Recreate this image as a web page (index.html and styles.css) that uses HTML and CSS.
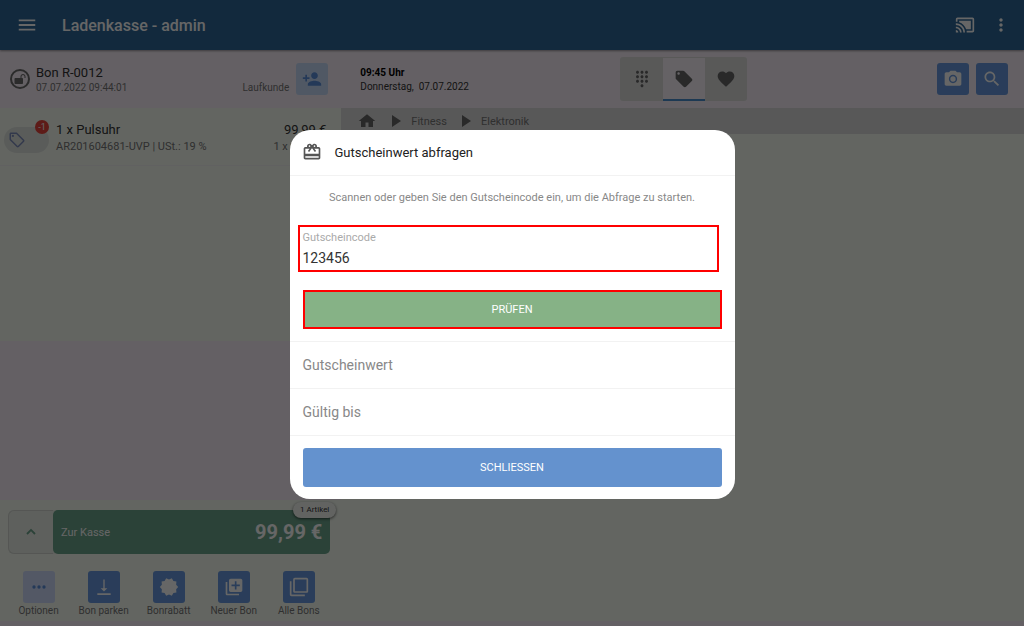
FILE: index.html
```html
<!DOCTYPE html>
<html lang="de">
<head>
    <meta charset="UTF-8">
    <meta name="viewport" content="width=device-width, initial-scale=1.0">
    <title>Ladenkasse - admin</title>
    <link rel="stylesheet" href="styles.css">
</head>
<body>
    <div class="app">
        <header class="app-bar">
            <button type="button" class="icon-btn" aria-label="Menü">
                <svg width="22" height="22" viewBox="0 0 24 24"><path d="M3 18h18v-2H3v2zm0-5h18v-2H3v2zm0-7v2h18V6H3z"/></svg>
            </button>
            <h1>Ladenkasse - admin</h1>
            <button type="button" class="icon-btn" aria-label="Kundendisplay">
                <svg width="20" height="20" viewBox="0 0 24 24"><path d="M1 18v3h3c0-1.66-1.34-3-3-3zm0-4v2c2.76 0 5 2.24 5 5h2c0-3.87-3.13-7-7-7zm18-7H5v1.63c3.96 1.28 7.09 4.41 8.37 8.37H19V7zM1 10v2c4.97 0 9 4.03 9 9h2c0-6.08-4.93-11-11-11zm20-7H3c-1.1 0-2 .9-2 2v3h2V5h18v14h-7v2h7c1.1 0 2-.9 2-2V5c0-1.1-.9-2-2-2z"/></svg>
            </button>
            <button type="button" class="icon-btn" aria-label="Mehr">
                <svg width="20" height="20" viewBox="0 0 24 24"><path d="M12 8c1.1 0 2-.9 2-2s-.9-2-2-2-2 .9-2 2 .9 2 2 2zm0 2c-1.1 0-2 .9-2 2s.9 2 2 2 2-.9 2-2-.9-2-2-2zm0 6c-1.1 0-2 .9-2 2s.9 2 2 2 2-.9 2-2-.9-2-2-2z"/></svg>
            </button>
        </header>

        <div class="columns">
            <section class="receipt">
                <div class="receipt-head">
                    <span class="lock">
                        <svg width="12" height="12" viewBox="0 0 24 24"><path d="M18 2c-2.800 0-5 2.200-5 5v3H3c-1.100 0-2 .9-2 2v8c0 1.100.9 2 2 2h13c1.100 0 2-.9 2-2v-8c0-1.100-.9-2-2-2h-1V7a3 3 0 0 1 6 0v3h2V7c0-2.800-2.200-5-5-5z"/></svg>
                    </span>
                    <div class="receipt-info">
                        <div class="name">Bon R-0012</div>
                        <div class="small">07.07.2022 09:44:01</div>
                    </div>
                    <span class="customer small">Laufkunde</span>
                    <button type="button" class="tile light" aria-label="Kunde hinzufügen">
                        <svg width="20" height="20" viewBox="0 0 24 24"><path d="M15 12c2.210 0 4-1.790 4-4s-1.790-4-4-4-4 1.790-4 4 1.790 4 4 4zm-9-2V7H4v3H1v2h3v3h2v-3h3v-2H6zm9 4c-2.670 0-8 1.340-8 4v2h16v-2c0-2.660-5.330-4-8-4z"/></svg>
                    </button>
                </div>

                <div class="items">
                    <div class="item">
                        <span class="item-tag">
                            <svg width="18" height="18" viewBox="0 0 24 24"><path d="M21.400 11.600l-9-9C12.050 2.220 11.550 2 11 2H4c-1.100 0-2 .9-2 2v7c0 .55.22 1.050.59 1.420l9 9c.36.36.86.58 1.410.58s1.050-.22 1.410-.59l7-7c.37-.36.59-.86.59-1.410s-.23-1.060-.6-1.400zM13 20L4 11V4h7l9 9-7 7z"/><circle cx="6.500" cy="6.500" r="1.500"/></svg>
                            <span class="badge">-1</span>
                        </span>
                        <div class="item-text">
                            <div class="line"><span>1 x Pulsuhr</span><span>99,99 €</span></div>
                            <div class="line sub"><span>AR201604681-UVP | USt.: 19 %</span><span>1 x 99,99 €</span></div>
                        </div>
                    </div>
                </div>

                <div class="receipt-foot">
                    <div class="pay">
                        <button type="button" class="expand" aria-label="Aufklappen">
                            <svg width="16" height="16" viewBox="0 0 24 24"><path d="M12 7l-7 7 2 2 5-5 5 5 2-2z"/></svg>
                        </button>
                        <button type="button" class="checkout"><span>Zur Kasse</span><strong>99,99 €</strong></button>
                        <span class="count">1 Artikel</span>
                    </div>
                    <div class="actions">
                        <div class="action">
                            <button type="button" class="tile light" id="options" aria-labelledby="l1">
                                <svg width="20" height="20" viewBox="0 0 24 24"><circle cx="6" cy="12" r="2"/><circle cx="12" cy="12" r="2"/><circle cx="18" cy="12" r="2"/></svg>
                            </button>
                            <span id="l1">Optionen</span>
                        </div>
                        <div class="action">
                            <button type="button" class="tile" aria-labelledby="l2">
                                <svg width="20" height="20" viewBox="0 0 24 24"><path d="M11.200 3h1.600v10.500H16L12 17.500 8 13.500h3.200zM4 19.500h16v2H4z"/></svg>
                            </button>
                            <span id="l2">Bon parken</span>
                        </div>
                        <div class="action">
                            <button type="button" class="tile" aria-labelledby="l3">
                                <svg width="20" height="20" viewBox="0 0 24 24"><path d="M23 12l-2.440-2.780.34-3.680-3.610-.82-1.890-3.180L12 3 8.600 1.540 6.710 4.720l-3.610.81.34 3.680L1 12l2.440 2.780-.34 3.690 3.610.82 1.890 3.180L12 21l3.400 1.460 1.890-3.180 3.610-.82-.34-3.680z"/></svg>
                            </button>
                            <span id="l3">Bonrabatt</span>
                        </div>
                        <div class="action">
                            <button type="button" class="tile" aria-labelledby="l4">
                                <svg width="20" height="20" viewBox="0 0 24 24"><path d="M4 6H2v14c0 1.100.9 2 2 2h14v-2H4V6zm16-4H8c-1.100 0-2 .9-2 2v12c0 1.100.9 2 2 2h12c1.100 0 2-.9 2-2V4c0-1.100-.9-2-2-2zm-1 9h-4v4h-2v-4H9V9h4V5h2v4h4v2z"/></svg>
                            </button>
                            <span id="l4">Neuer Bon</span>
                        </div>
                        <div class="action">
                            <button type="button" class="tile" aria-labelledby="l5">
                                <svg width="20" height="20" viewBox="0 0 24 24"><path d="M3 5H1v16c0 1.100.9 2 2 2h16v-2H3V5zm18-4H7c-1.100 0-2 .9-2 2v14c0 1.100.9 2 2 2h14c1.100 0 2-.9 2-2V3c0-1.100-.9-2-2-2zm0 16H7V3h14v14z"/></svg>
                            </button>
                            <span id="l5">Alle Bons</span>
                        </div>
                    </div>
                </div>
            </section>

            <section class="catalog">
                <div class="toolbar">
                    <div class="clock">
                        <strong>09:45 Uhr</strong>
                        <span>Donnerstag,&nbsp; 07.07.2022</span>
                    </div>
                    <div class="tabs">
                        <button type="button" class="tab" aria-label="Ziffernblock">
                            <svg width="18" height="18" viewBox="0 0 24 24"><path d="M12 19c-1.100 0-2 .9-2 2s.9 2 2 2 2-.9 2-2-.9-2-2-2zM6 1c-1.100 0-2 .9-2 2s.9 2 2 2 2-.9 2-2-.9-2-2-2zm0 6c-1.100 0-2 .9-2 2s.9 2 2 2 2-.9 2-2-.9-2-2-2zm0 6c-1.100 0-2 .9-2 2s.9 2 2 2 2-.9 2-2-.9-2-2-2zm12-8c1.100 0 2-.9 2-2s-.9-2-2-2-2 .9-2 2 .9 2 2 2zm-6 8c-1.100 0-2 .9-2 2s.9 2 2 2 2-.9 2-2-.9-2-2-2zm6 0c-1.100 0-2 .9-2 2s.9 2 2 2 2-.9 2-2-.9-2-2-2zm0-6c-1.100 0-2 .9-2 2s.9 2 2 2 2-.9 2-2-.9-2-2-2zm-6 0c-1.100 0-2 .9-2 2s.9 2 2 2 2-.9 2-2-.9-2-2-2zm0-6c-1.100 0-2 .9-2 2s.9 2 2 2 2-.9 2-2-.9-2-2-2z"/></svg>
                        </button>
                        <button type="button" class="tab active" aria-label="Artikel">
                            <svg width="20" height="20" viewBox="0 0 24 24"><path d="M21.410 11.580l-9-9C12.050 2.220 11.550 2 11 2H4c-1.100 0-2 .9-2 2v7c0 .55.22 1.050.59 1.420l9 9c.36.36.86.58 1.410.58.55 0 1.050-.22 1.410-.59l7-7c.37-.36.59-.86.59-1.410 0-.55-.23-1.060-.59-1.420zM5.500 7C4.670 7 4 6.330 4 5.500S4.670 4 5.500 4 7 4.670 7 5.500 6.330 7 5.500 7z"/></svg>
                        </button>
                        <button type="button" class="tab" aria-label="Favoriten">
                            <svg width="20" height="20" viewBox="0 0 24 24"><path d="M12 21.350l-1.450-1.320C5.400 15.360 2 12.280 2 8.500 2 5.420 4.420 3 7.500 3c1.740 0 3.410.81 4.500 2.090C13.090 3.810 14.760 3 16.500 3 19.580 3 22 5.420 22 8.500c0 3.780-3.400 6.860-8.550 11.540L12 21.350z"/></svg>
                        </button>
                    </div>
                    <div class="tools">
                        <button type="button" class="tile" aria-label="Kamera">
                            <svg width="20" height="20" viewBox="0 0 24 24"><circle cx="12" cy="12" r="3.200"/><path d="M9 2L7.170 4H4c-1.100 0-2 .9-2 2v12c0 1.100.9 2 2 2h16c1.100 0 2-.9 2-2V6c0-1.100-.9-2-2-2h-3.170L15 2H9zm3 15c-2.760 0-5-2.240-5-5s2.240-5 5-5 5 2.240 5 5-2.240 5-5 5z"/></svg>
                        </button>
                        <button type="button" class="tile" aria-label="Suchen">
                            <svg width="20" height="20" viewBox="0 0 24 24"><path d="M15.500 14h-.79l-.28-.27C15.410 12.590 16 11.110 16 9.500 16 5.910 13.090 3 9.500 3S3 5.910 3 9.500 5.910 16 9.500 16c1.610 0 3.090-.59 4.230-1.570l.27.28v.79l5 4.990L20.490 19l-4.990-5zm-6 0C7.010 14 5 11.990 5 9.500S7.010 5 9.500 5 14 7.010 14 9.500 11.990 14 9.500 14z"/></svg>
                        </button>
                    </div>
                </div>
                <nav class="breadcrumb">
                    <a href="#" aria-label="Start"><svg width="18" height="18" viewBox="0 0 24 24"><path d="M10 20v-6h4v6h6v-8h3L12 3 1 12h3v8z"/></svg></a>
                    <svg width="10" height="12" viewBox="0 0 10 12"><path d="M1 0l9 6-9 6z"/></svg>
                    <a href="#">Fitness</a>
                    <svg width="10" height="12" viewBox="0 0 10 12"><path d="M1 0l9 6-9 6z"/></svg>
                    <a href="#">Elektronik</a>
                </nav>
                <div class="products"></div>
            </section>
        </div>
    </div>

    <div class="backdrop">
        <form class="dialog" role="dialog" aria-labelledby="dialogTitle">
            <div class="dialog-head">
                <svg width="20" height="20" viewBox="0 0 24 24"><path d="M20 6h-2.180c.11-.31.18-.65.18-1 0-1.660-1.340-3-3-3-1.050 0-1.960.54-2.500 1.350l-.5.67-.5-.68C10.960 2.540 10.050 2 9 2 7.340 2 6 3.340 6 5c0 .35.07.69.18 1H4c-1.110 0-1.990.89-1.990 2L2 19c0 1.110.89 2 2 2h16c1.110 0 2-.89 2-2V8c0-1.110-.89-2-2-2zm-5-2c.55 0 1 .45 1 1s-.45 1-1 1-1-.45-1-1 .45-1 1-1zM9 4c.55 0 1 .45 1 1s-.45 1-1 1-1-.45-1-1 .45-1 1-1zm11 15H4v-2h16v2zm0-5H4V8h5.080L7 10.830 8.620 12 11 8.760l1-1.360 1 1.360L15.380 12 17 10.830 14.920 8H20v6z"/></svg>
                <h2 id="dialogTitle">Gutscheinwert abfragen</h2>
            </div>
            <p class="hint">Scannen oder geben Sie den Gutscheincode ein, um die Abfrage zu starten.</p>
            <div class="field">
                <label for="code">Gutscheincode</label>
                <input type="text" id="code" value="123456">
            </div>
            <button type="button" class="btn check">PRÜFEN</button>
            <div class="row">Gutscheinwert</div>
            <div class="row">Gültig bis</div>
            <div class="dialog-foot">
                <button type="button" class="btn close">SCHLIESSEN</button>
            </div>
        </form>
    </div>
</body>
</html>
```

FILE: styles.css
```css
* {
    box-sizing: border-box;
}
body {
    margin: 0;
    font-family: Roboto, "Liberation Sans", sans-serif;
    font-size: 13px;
    color: #333;
    background: #faf1fa;
}
button {
    font-family: inherit;
    border: none;
    padding: 0;
    cursor: pointer;
}
svg {
    display: block;
    flex: none;
    fill: currentColor;
}
.app {
    display: flex;
    flex-direction: column;
    min-height: 100vh;
    padding-bottom: 5px;
}

/* Kopfzeile */
.app-bar {
    display: flex;
    align-items: center;
    gap: 16px;
    height: 50px;
    padding: 0 13px 0 16px;
    background: #2d6798;
    color: #fff;
    box-shadow: 0 1px 2px rgba(0,0,0,0.4);
    z-index: 1;
}
.app-bar h1 {
    flex: 1;
    margin: 0 0 0 8px;
    font-size: 16px;
    font-weight: 500;
}
.icon-btn {
    background: none;
    color: inherit;
}
.columns {
    flex: 1;
    display: grid;
    grid-template-columns: 1fr 2fr;
}

/* Bon */
.receipt {
    display: flex;
    flex-direction: column;
}
.receipt-head {
    display: flex;
    align-items: center;
    height: 58px;
    padding: 0 13px 0 10px;
}
.lock {
    display: flex;
    align-items: center;
    justify-content: center;
    width: 20px;
    height: 20px;
    border: 2px solid #6b6b6b;
    border-radius: 50%;
    color: #6b6b6b;
}
.receipt-info {
    flex: 1;
    margin: 2px 0 0 6px;
}
.name {
    line-height: 16px;
}
.small {
    font-size: 10px;
    line-height: 14px;
    color: #777;
}
.customer {
    margin: 18px 7px 0 0;
}
.tile {
    display: flex;
    align-items: center;
    justify-content: center;
    width: 32px;
    height: 32px;
    border-radius: 3px;
    background: #699ae0;
    color: #fff;
}
.tile.light {
    background: #c8dcfa;
    color: #5a8fdc;
}
#options {
    background: #cfdcfc;
}
.items {
    flex: 0 0 233px;
    background: #f7fdf3;
}
.item {
    display: flex;
    align-items: center;
    gap: 7px;
    height: 58px;
    padding: 2px 15px 0 4px;
    border-bottom: 1px solid #f2f2f2;
}
.item-tag {
    position: relative;
    display: flex;
    align-items: center;
    width: 45px;
    height: 26px;
    margin-top: 4px;
    padding-left: 4px;
    border-radius: 13px;
    background: #e2e6e0;
    color: #7f8fbe;
}
.badge {
    position: absolute;
    top: -7px;
    right: 0;
    width: 14px;
    border-radius: 7px;
    background: #e8453c;
    color: #fff;
    font-size: 9px;
    line-height: 14px;
    text-align: center;
}
.item-text {
    flex: 1;
}
.line {
    display: flex;
    justify-content: space-between;
    line-height: 17px;
}
.line.sub {
    font-size: 11px;
    color: #777;
}
.receipt-foot {
    margin-top: auto;
    padding: 10px 11px 3px 8px;
    background: #f7fdf3;
}
.pay {
    position: relative;
    display: flex;
    height: 44px;
    border-radius: 6px;
    background: #ebefe8;
}
.expand {
    display: flex;
    align-items: center;
    justify-content: center;
    width: 45px;
    border: 1px solid #d4d8d2;
    border-right: none;
    border-radius: 6px 0 0 6px;
    background: none;
    color: #6ca58c;
}
.checkout {
    flex: 1;
    display: flex;
    align-items: center;
    justify-content: space-between;
    padding: 0 8px;
    border-radius: 5px;
    background: #6ca58c;
    color: #fff;
    font-size: 11px;
}
.checkout strong {
    font-size: 20px;
    font-weight: 700;
}
.count {
    position: absolute;
    top: -8px;
    right: -6px;
    padding: 0 7px;
    border-radius: 8px;
    background: #f5f8f3;
    box-shadow: 0 1px 3px rgba(0,0,0,0.6);
    font-size: 8px;
    line-height: 16px;
}
.actions {
    display: grid;
    grid-template-columns: repeat(5, 1fr);
    margin: 17px -1px 0 -2px;
}
.action {
    display: flex;
    flex-direction: column;
    align-items: center;
    font-size: 10px;
    line-height: 15px;
    color: #777;
    white-space: nowrap;
}

/* Artikelauswahl */
.catalog {
    display: flex;
    flex-direction: column;
}
.toolbar {
    display: grid;
    grid-template-columns: 260px 1fr auto;
    align-items: center;
    height: 58px;
    padding: 0 16px 0 19px;
}
.clock {
    display: flex;
    flex-direction: column;
    margin-top: 2px;
    font-size: 10px;
    line-height: 14px;
}
.clock strong {
    color: #000;
}
.tabs {
    display: flex;
}
.tab {
    display: flex;
    justify-content: center;
    align-items: center;
    width: 42px;
    height: 44px;
    background: #dededd;
    color: #666;
}
.tab.active {
    background: #fcf6fd;
    border-top: 1px solid #dededd;
    border-bottom: 2px solid #4a8fd0;
}
.tab:first-child {
    width: 43px;
    border-radius: 3px 0 0 3px;
}
.tab:last-child {
    border-radius: 0 3px 3px 0;
}
.tools {
    display: flex;
    gap: 7px;
}
.breadcrumb {
    display: flex;
    align-items: center;
    height: 26px;
    padding-left: 17px;
    background: #dcdcdc;
    color: #666;
}
.breadcrumb a {
    margin-right: 14px;
    color: #777;
    font-size: 11px;
    text-decoration: none;
}
.breadcrumb a:first-child {
    margin-right: 15px;
    color: #666;
}
.breadcrumb > svg {
    margin-right: 10px;
}
.products {
    flex: 1;
    background: #f7fdf3;
}

/* Dialog */
.backdrop {
    position: fixed;
    inset: 0;
    display: flex;
    align-items: center;
    justify-content: center;
    padding-top: 2px;
    background: rgba(0,0,0,0.6);
    z-index: 2;
}
.dialog {
    width: 445px;
    max-width: 96%;
    border-radius: 20px;
    background: #fff;
    overflow: hidden;
}
.dialog-head {
    display: flex;
    align-items: center;
    gap: 13px;
    height: 46px;
    padding: 0 12px;
    border-bottom: 1px solid #f2f2f2;
    color: #555;
}
.dialog-head h2 {
    margin: 0;
    font-size: 13px;
    font-weight: 400;
    color: #222;
}
.hint {
    margin: 14px 0 20px;
    font-size: 11px;
    line-height: 15px;
    color: #888;
    text-align: center;
}
.field {
    margin: 0 16px 18px 8px;
    padding: 3px;
    border: 2px solid #f00;
}
.field label {
    display: block;
    font-size: 11px;
    line-height: 15px;
    color: #aaa;
}
.field input {
    display: block;
    width: 100%;
    height: 22px;
    padding: 5px 0 0;
    border: none;
    outline: none;
    background: none;
    font-family: inherit;
    font-size: 14px;
    color: #333;
}
.btn {
    display: block;
    width: 100%;
    height: 39px;
    border-radius: 3px;
    color: #fff;
    font-size: 11px;
}
.btn.check {
    width: calc(100% - 26px);
    margin: 0 13px 12px;
    border: 2px solid #f00;
    border-radius: 0;
    background: #86b286;
}
.btn.close {
    background: #6492ce;
}
.row {
    height: 47px;
    padding: 0 13px;
    border-top: 1px solid #f2f2f2;
    font-size: 14px;
    line-height: 47px;
    color: #888;
}
.dialog-foot {
    padding: 12px 13px;
    border-top: 1px solid #f2f2f2;
}
```
